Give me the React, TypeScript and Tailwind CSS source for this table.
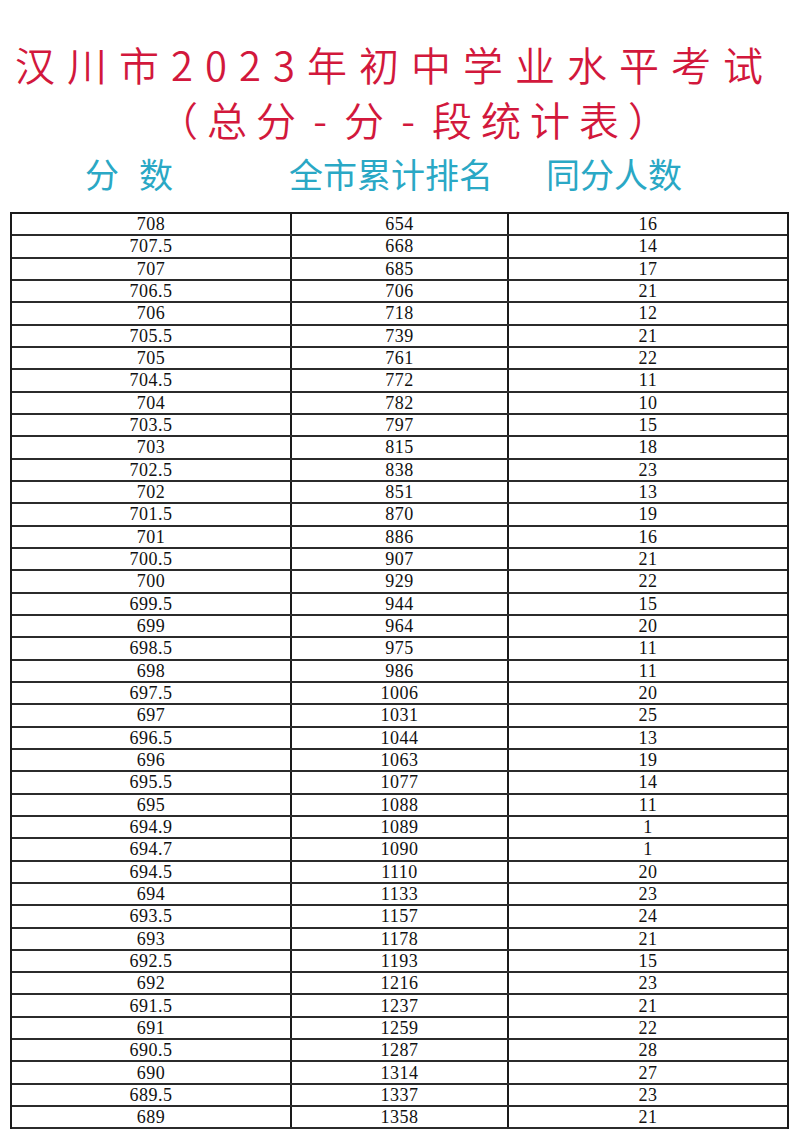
import React from 'react';

const ROWS: [string, string, string][] = [
  ['708', '654', '16'],
  ['707.5', '668', '14'],
  ['707', '685', '17'],
  ['706.5', '706', '21'],
  ['706', '718', '12'],
  ['705.5', '739', '21'],
  ['705', '761', '22'],
  ['704.5', '772', '11'],
  ['704', '782', '10'],
  ['703.5', '797', '15'],
  ['703', '815', '18'],
  ['702.5', '838', '23'],
  ['702', '851', '13'],
  ['701.5', '870', '19'],
  ['701', '886', '16'],
  ['700.5', '907', '21'],
  ['700', '929', '22'],
  ['699.5', '944', '15'],
  ['699', '964', '20'],
  ['698.5', '975', '11'],
  ['698', '986', '11'],
  ['697.5', '1006', '20'],
  ['697', '1031', '25'],
  ['696.5', '1044', '13'],
  ['696', '1063', '19'],
  ['695.5', '1077', '14'],
  ['695', '1088', '11'],
  ['694.9', '1089', '1'],
  ['694.7', '1090', '1'],
  ['694.5', '1110', '20'],
  ['694', '1133', '23'],
  ['693.5', '1157', '24'],
  ['693', '1178', '21'],
  ['692.5', '1193', '15'],
  ['692', '1216', '23'],
  ['691.5', '1237', '21'],
  ['691', '1259', '22'],
  ['690.5', '1287', '28'],
  ['690', '1314', '27'],
  ['689.5', '1337', '23'],
  ['689', '1358', '21'],
];

const CJK = { fontFamily: '"Noto Sans CJK SC", "Noto Sans", sans-serif' };
const SERIF = { fontFamily: '"Liberation Serif", "DejaVu Serif", serif' };

export default function App() {
  return (
    <div className="h-[1131px] w-[800px] overflow-hidden bg-white">
      <div style={CJK} className="text-[#d2183c]">
        <h1 className="mt-[42px] pr-[10px] text-center text-[40px] font-[350] leading-[44px] tracking-[12px]">
          汉川市2023年初中学业水平考试
        </h1>
        <p className="mt-[11px] flex justify-center gap-[9px] pl-[22px] text-[40px] font-[350] leading-[44px]">
          <span className="w-[40px] text-right">（</span>
          <span>总</span>
          <span>分</span>
          <span className="w-[30px] text-center">-</span>
          <span>分</span>
          <span className="w-[30px] text-center">-</span>
          <span>段</span>
          <span>统</span>
          <span>计</span>
          <span>表</span>
          <span className="w-[36px] text-left">）</span>
        </p>
      </div>

      <div
        style={CJK}
        className="mt-[13px] flex h-[40px] items-center text-[34px] leading-none text-[#2aa8c5]"
      >
        <span className="ml-[85px] flex gap-[20px]">
          <span>分</span>
          <span>数</span>
        </span>
        <span className="ml-[116px]">全市累计排名</span>
        <span className="ml-[53px]">同分人数</span>
      </div>

      <div className="mt-[18px] ml-[10px] w-[779px] border-x-2 border-t-2 border-[#1a1a1a]">
        {ROWS.map(([score, rank, same]) => (
          <div
            key={score}
            style={SERIF}
            className="grid h-[22.33px] grid-cols-[278px_217px_1fr] border-b-2 border-[#2b2b2b] text-[18px] leading-none tracking-[0.5px] text-[#111]"
          >
            <div className="flex items-center justify-center">{score}</div>
            <div className="flex items-center justify-center border-l-2 border-[#1a1a1a]">{rank}</div>
            <div className="flex items-center justify-center border-l-2 border-[#1a1a1a]">{same}</div>
          </div>
        ))}
      </div>
    </div>
  );
}
